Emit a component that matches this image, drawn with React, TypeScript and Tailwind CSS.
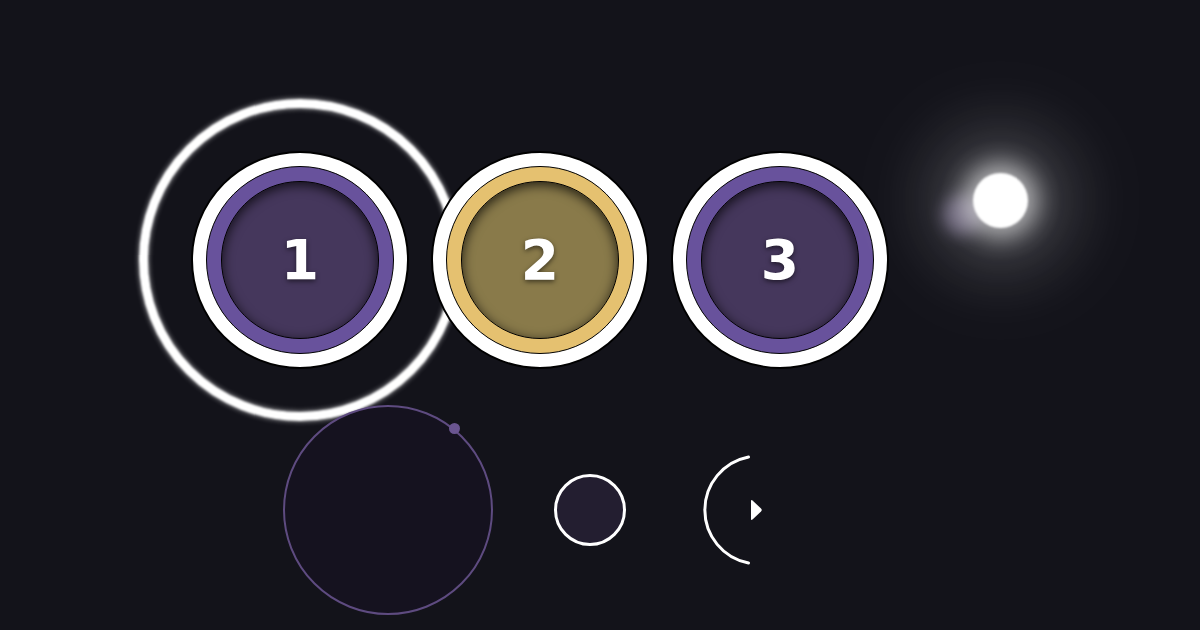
import React from "react";

type Tone = { ring: string; disc: string };

function Badge({ label, ring, disc }: { label: string } & Tone) {
  return (
    <div className="relative w-[218px] h-[218px] rounded-full bg-white border-2 border-black flex items-center justify-center shrink-0">
      <div className={`w-[188px] h-[188px] rounded-full border border-black flex items-center justify-center ${ring}`}>
        <div
          className={`w-[158px] h-[158px] rounded-full border border-black flex items-center justify-center shadow-[inset_0_3px_12px_rgba(0,0,0,0.75)] ${disc}`}
        >
          <span className="text-white font-bold text-[55px] leading-none [font-family:'DejaVu_Sans',sans-serif] [text-shadow:0_2px_5px_rgba(0,0,0,0.55)]">
            {label}
          </span>
        </div>
      </div>
    </div>
  );
}

export default function App() {
  return (
    <div className="relative w-[1200px] h-[630px] overflow-hidden bg-[#13131a]">
      {/* top row */}
      <div className="flex gap-[22px] pl-[191px] pt-[151px]">
        <div className="relative shrink-0">
          <div className="absolute left-1/2 top-1/2 -translate-x-1/2 -translate-y-1/2 w-[322px] h-[322px] rounded-full border-[9px] border-white blur-[1px] shadow-[0_0_5px_rgba(255,255,255,0.7),inset_0_0_5px_rgba(255,255,255,0.7)] pointer-events-none" />
          <Badge label="1" ring="bg-[#68529c]" disc="bg-[#45375c]" />
        </div>
        <Badge label="2" ring="bg-[#e5c170]" disc="bg-[#897a4a]" />
        <Badge label="3" ring="bg-[#68529c]" disc="bg-[#45375c]" />
      </div>

      {/* bottom row */}
      <div className="flex items-center pl-[283px] mt-[36px]">
        <div className="relative w-[210px] h-[210px] rounded-full border-2 border-[#5e4b80] bg-[#15121f] shrink-0">
          <div className="absolute left-[164px] top-[16px] w-[11px] h-[11px] rounded-full bg-[#6a5590]" />
        </div>
        <div className="ml-[61px] w-[72px] h-[72px] rounded-full border-[3px] border-white bg-[#231e30] shrink-0" />
        <svg className="ml-[72px] shrink-0" width="120" height="120" viewBox="0 0 120 120">
          <path
            d="M 50.5 7 A 54 54 0 0 0 50.5 113"
            fill="none"
            stroke="white"
            strokeWidth="3"
            strokeLinecap="round"
          />
          <path
            d="M 53 51 Q 53 49.5 54.5 50.5 L 63 58.5 Q 64.5 60 63 61.5 L 54.5 69.5 Q 53 70.5 53 69 Z"
            fill="white"
          />
        </svg>
      </div>

      {/* glowing orb */}
      <div className="absolute left-[942px] top-[195px] w-[40px] h-[40px] rounded-full bg-[#c2b0e0] opacity-40 blur-[8px]" />
      <div className="absolute left-[973px] top-[173px] w-[55px] h-[55px] rounded-full bg-white blur-[1px] shadow-[0_0_24px_10px_rgba(255,255,255,0.6),0_0_70px_35px_rgba(255,255,255,0.22),0_0_120px_60px_rgba(255,255,255,0.06)]" />
    </div>
  );
}
